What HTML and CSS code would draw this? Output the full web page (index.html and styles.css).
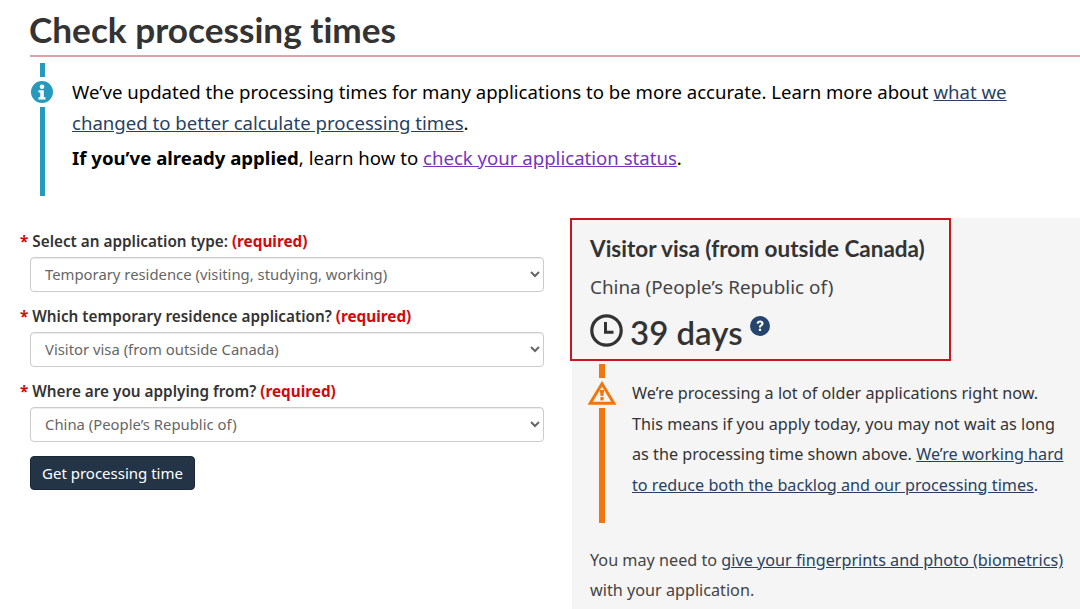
FILE: index.html
```html
<!DOCTYPE html>
<html lang="en">

<head>
    <meta charset="UTF-8">
    <meta name="viewport" content="width=device-width, initial-scale=1.0">
    <title>Check processing times</title>
    <link rel="stylesheet" href="styles.css">
</head>

<body>
    <header class="page-head">
        <h1>Check processing times</h1>
    </header>

    <section class="notice notice-info">
        <div class="notice-rail">
            <span class="rail-top"></span>
            <svg class="notice-icon" viewBox="0 0 24 24" width="24" height="24">
                <circle cx="12" cy="12" r="11" fill="#269abc"></circle>
                <circle cx="12" cy="6.8" r="2.3" fill="#fff"></circle>
                <path d="M8.5 10.2h5.3v7h1.7v2.2H8.5v-2.2h1.8v-4.8H8.5z" fill="#fff"></path>
            </svg>
            <span class="rail-bottom"></span>
        </div>
        <div class="notice-body">
            <p>We’ve updated the processing times for many applications to be more accurate. Learn more about <a href="#">what we changed to better calculate processing times</a>.</p>
            <p class="notice-second"><strong>If you’ve already applied</strong>, learn how to <a class="visited" href="#">check your application status</a>.</p>
        </div>
    </section>

    <main class="columns">
        <form class="time-form">
            <div class="field">
                <label for="app-type"><span class="star">*</span> Select an application type: <strong class="req">(required)</strong></label>
                <select id="app-type">
                    <option>Temporary residence (visiting, studying, working)</option>
                </select>
            </div>
            <div class="field">
                <label for="app-which"><span class="star">*</span> Which temporary residence application? <strong class="req">(required)</strong></label>
                <select id="app-which">
                    <option>Visitor visa (from outside Canada)</option>
                </select>
            </div>
            <div class="field">
                <label for="app-from"><span class="star">*</span> Where are you applying from? <strong class="req">(required)</strong></label>
                <select id="app-from">
                    <option>China (People’s Republic of)</option>
                </select>
            </div>
            <button type="button" class="submit">Get processing time</button>
        </form>

        <aside class="result">
            <div class="result-box">
                <h2>Visitor visa (from outside Canada)</h2>
                <p class="country">China (People’s Republic of)</p>
                <p class="days">
                    <svg class="clock" viewBox="0 0 33 33" width="33" height="33">
                        <circle cx="16.5" cy="16.5" r="14.7" fill="none" stroke="#333" stroke-width="3.2"></circle>
                        <path d="M15.5 8v10.2h8" fill="none" stroke="#333" stroke-width="3"></path>
                    </svg>
                    <span>39 days</span>
                    <svg class="help" viewBox="0 0 20 20" width="20" height="20">
                        <circle cx="10" cy="10" r="10" fill="#26456e"></circle>
                        <path d="M6.6 7.6C6.8 5.6 8.2 4.6 10.1 4.6c2 0 3.4 1.1 3.4 2.8 0 2.4-2.5 2.4-2.5 4.2H8.9c0-2.9 2.4-2.8 2.4-4.1 0-.6-.5-1-1.2-1-.8 0-1.3.5-1.4 1.3z" fill="#fff"></path>
                        <rect x="8.9" y="12.7" width="2.2" height="2.3" fill="#fff"></rect>
                    </svg>
                </p>
            </div>

            <section class="notice notice-warn">
                <div class="notice-rail">
                    <span class="rail-top"></span>
                    <svg class="notice-icon" viewBox="0 0 28 24" width="28" height="24">
                        <path d="M14 2.8 25.8 22.3H2.2z" fill="none" stroke="#f2760f" stroke-width="3"></path>
                        <path d="M11.8 9h4.4l-.8 6h-2.8z" fill="#f2760f"></path>
                        <rect x="12.4" y="16" width="3.2" height="3.4" fill="#f2760f"></rect>
                    </svg>
                    <span class="rail-bottom"></span>
                </div>
                <p class="notice-body">We’re processing a lot of older applications right now. This means if you apply today, you may not wait as long as the processing time shown above. <a href="#">We’re working hard to reduce both the backlog and our processing times</a>.</p>
            </section>

            <p class="biometrics">You may need to <a href="#">give your fingerprints and photo (biometrics)</a> with your application.</p>
        </aside>
    </main>
</body>

</html>
```

FILE: styles.css
```css
html,
body {
    height: 609px;
    overflow: hidden;
}

body {
    margin: 0;
    font-family: "Noto Sans", "Open Sans", sans-serif;
    color: #333;
    background-color: #fff;
}

a {
    color: #284162;
}

a.visited {
    color: #7834bc;
}

p {
    margin: 0;
}

.page-head {
    margin-left: 30px;
    height: 55px;
    border-bottom: 2px solid #dba3a6;
}

h1 {
    margin: 0 0 0 -1px;
    font-family: Lato, sans-serif;
    font-size: 35.2px;
    font-weight: 700;
    font-variant-ligatures: none;
    line-height: 58px;
    color: #333;
}

.notice {
    display: flex;
}

.notice-rail {
    display: flex;
    flex-direction: column;
    align-items: center;
    flex: none;
}

.rail-top,
.rail-bottom {
    display: block;
    width: 5px;
}

.rail-top {
    height: 14px;
}

.rail-bottom {
    flex: 1;
}

.notice-info {
    margin: 6px 0 0 30px;
    height: 133px;
    color: #000;
    font-size: 18.6px;
}

.notice-info .notice-rail {
    width: 24px;
}

.notice-info .rail-top,
.notice-info .rail-bottom {
    background-color: #269abc;
}

.notice-icon {
    display: block;
    margin: 3px 0;
    flex: none;
}

.notice-info .notice-body {
    margin-left: 18px;
    padding-top: 13px;
    line-height: 31px;
    width: 960px;
}

.notice-second {
    margin-top: 4px;
}

.columns {
    display: flex;
    margin-top: 22px;
}

.time-form {
    width: 524px;
    margin-left: 20px;
    padding-top: 13px;
    flex: none;
}

.field {
    margin-bottom: 14px;
}

.field label {
    display: block;
    font-size: 15.3px;
    font-weight: 600;
    line-height: 20px;
    color: #333;
    margin-bottom: 6px;
}

.star,
.req {
    color: #d3080c;
    font-weight: 700;
}

.field select {
    display: block;
    margin-left: 10px;
    width: 514px;
    height: 35px;
    padding: 0 10px 2px;
    font-family: "Noto Sans", sans-serif;
    font-size: 14.85px;
    color: #666;
    background-color: #fff;
    border: 1px solid #ccc;
    border-radius: 4px;
    box-shadow: inset 0 1px 1px rgba(0, 0, 0, 0.075);
}

.submit {
    display: block;
    margin-left: 10px;
    height: 34px;
    padding: 0 11px;
    font-family: "Noto Sans", sans-serif;
    font-size: 15px;
    color: #fff;
    background-color: #233447;
    border: 1px solid #1b2735;
    border-radius: 4px;
}

.result {
    margin-left: 28px;
    flex: 1;
    background-color: #f5f5f5;
    height: 392px;
    font-size: 16.2px;
    color: #333;
}

.result-box {
    margin-left: -2px;
    width: 381px;
    height: 143px;
    box-sizing: border-box;
    padding: 13px 18px 0;
    border: 2px solid #c9151c;
}

.result-box h2 {
    margin: 0;
    font-family: Lato, sans-serif;
    font-size: 22.5px;
    font-weight: 700;
    font-variant-ligatures: none;
    line-height: 32px;
    color: #333;
}

.country {
    margin-top: 9px;
    font-size: 18.85px;
    line-height: 26px;
    color: #444;
}

.days {
    display: flex;
    align-items: flex-start;
    gap: 7px;
    margin-top: 10px;
    font-family: Lato, sans-serif;
    font-size: 33px;
    font-weight: 600;
    line-height: 44px;
    color: #333;
}

.clock {
    margin-top: 4px;
}

.help {
    margin-top: 6px;
}

.notice-warn {
    margin: 3px 0 0 16px;
    height: 159px;
}

.notice-warn .notice-rail {
    width: 28px;
}

.notice-warn .rail-top,
.notice-warn .rail-bottom {
    background-color: #f2760f;
    width: 6px;
}

.notice-warn .notice-body {
    margin-left: 16px;
    padding-top: 14px;
    width: 436px;
    line-height: 30.5px;
}

.biometrics {
    margin: 22px 0 0 18px;
    width: 480px;
    line-height: 30px;
    color: #444;
}
```
